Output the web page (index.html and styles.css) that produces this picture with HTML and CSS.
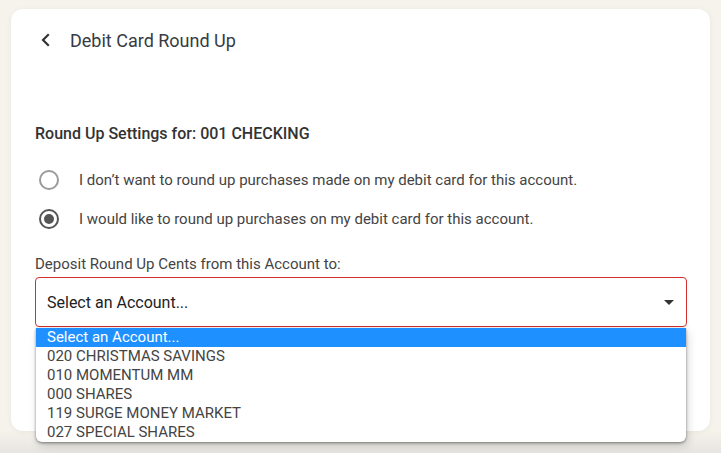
FILE: index.html
```html
<!DOCTYPE html>
<html>
<head>
<meta charset="utf-8">
<link rel="stylesheet" href="styles.css">
</head>
<body>
<div class="card">
  <div class="header">
    <svg class="back" width="14" height="14" viewBox="0 0 14 14"><polyline points="9,2 4,7 9,12" fill="none" stroke="#333" stroke-width="2.2" stroke-linecap="square"/></svg>
    <span class="title">Debit Card Round Up</span>
  </div>
  <div class="section-title">Round Up Settings for: 001 CHECKING</div>
  <div class="radios">
    <div class="radio-row"><span class="radio"></span><span>I don’t want to round up purchases made on my debit card for this account.</span></div>
    <div class="radio-row"><span class="radio checked"></span><span>I would like to round up purchases on my debit card for this account.</span></div>
  </div>
  <div class="label">Deposit Round Up Cents from this Account to:</div>
  <div class="select-wrap">
    <div class="select">
      <span>Select an Account...</span>
      <svg class="caret" width="10" height="5" viewBox="0 0 10 5"><polygon points="0,0 10,0 5,5" fill="#333"/></svg>
    </div>
    <ul class="options">
      <li class="active">Select an Account...</li>
      <li>020 CHRISTMAS SAVINGS</li>
      <li>010 MOMENTUM MM</li>
      <li>000 SHARES</li>
      <li>119 SURGE MONEY MARKET</li>
      <li>027 SPECIAL SHARES</li>
    </ul>
  </div>
</div>
</body>
</html>
```
FILE: styles.css
```css
html, body {
  margin: 0;
  padding: 0;
}
body {
  background: linear-gradient(#f6f3ed 0, #f6f3ed 430px, #e7e5e1 453px);
  height: 453px;
  overflow: hidden;
  font-family: Roboto, "Liberation Sans", sans-serif;
  color: #3a3a3a;
}
.card {
  margin: 9px 0 0 11px;
  width: 699px;
  height: 422px;
  box-sizing: border-box;
  padding: 20px 23px 0 24px;
  background: #fff;
  border-radius: 12px;
  box-shadow: 0 1px 6px rgba(0,0,0,0.05);
}
.header {
  display: flex;
  align-items: center;
  height: 22px;
  margin-left: 2px;
}
.back {
  margin-left: 2px;
}
.title {
  margin-left: 17px;
  font-size: 18px;
  color: #363b45;
}
.section-title {
  margin-top: 73px;
  font-size: 16px;
  line-height: 20px;
  font-weight: 500;
  color: #333;
}
.radios {
  margin-top: 16px;
  display: flex;
  flex-direction: column;
}
.radio-row {
  display: flex;
  align-items: center;
  height: 39px;
  font-size: 15px;
  color: #444;
}
.radio {
  width: 20px;
  height: 20px;
  box-sizing: border-box;
  border: 2px solid #9b9b9b;
  border-radius: 50%;
  margin: 0 20px 0 4px;
  display: flex;
  align-items: center;
  justify-content: center;
}
.radio.checked {
  border-color: #555;
}
.radio.checked::after {
  content: "";
  width: 10px;
  height: 10px;
  border-radius: 50%;
  background: #555;
}
.label {
  margin-top: 16px;
  font-size: 15px;
  line-height: 20px;
  color: #444;
}
.select-wrap {
  position: relative;
  margin-top: 3px;
}
.select {
  height: 50px;
  box-sizing: border-box;
  border: 1px solid #d32f2f;
  border-radius: 4px;
  display: flex;
  align-items: center;
  justify-content: space-between;
  padding: 0 12px 0 11px;
  font-size: 16px;
  color: #222;
}
.caret {
  margin-top: 1px;
}
.options {
  position: absolute;
  top: 51px;
  left: 1px;
  width: 650px;
  margin: 0;
  padding: 0;
  list-style: none;
  background: #fff;
  border-radius: 0 0 6px 6px;
  box-shadow: 0 1px 3px rgba(0,0,0,0.45), 2px 4px 10px rgba(0,0,0,0.15);
  overflow: hidden;
}
.options li {
  height: 19px;
  line-height: 19px;
  padding-left: 11px;
  font-size: 15px;
  color: #444;
}
.options li.active {
  background: #1e90ff;
  color: #fff;
}
```
